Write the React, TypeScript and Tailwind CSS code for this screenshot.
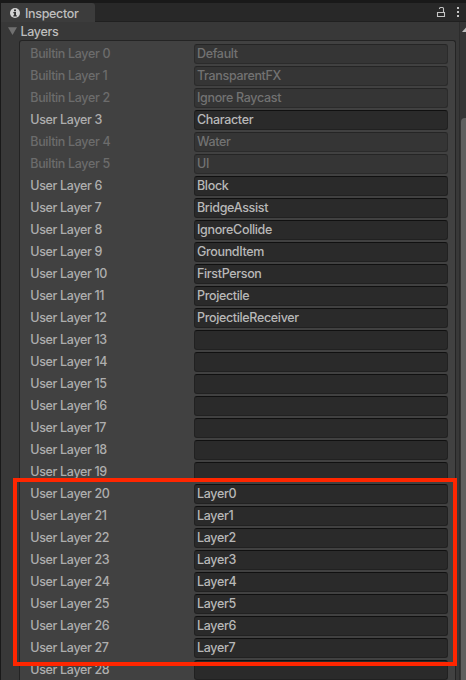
const names: Record<number, string> = {
  0: 'Default', 1: 'TransparentFX', 2: 'Ignore Raycast', 3: 'Character', 4: 'Water', 5: 'UI',
  6: 'Block', 7: 'BridgeAssist', 8: 'IgnoreCollide', 9: 'GroundItem', 10: 'FirstPerson',
  11: 'Projectile', 12: 'ProjectileReceiver',
  20: 'Layer0', 21: 'Layer1', 22: 'Layer2', 23: 'Layer3', 24: 'Layer4', 25: 'Layer5', 26: 'Layer6', 27: 'Layer7',
};
const builtin = [0, 1, 2, 4, 5];

function LayerRow({ index }: { index: number }) {
  const locked = builtin.includes(index);
  return (
    <div className="flex h-[22px] shrink-0 items-start">
      <div className={`w-[164px] shrink-0 pl-[0.3px] leading-[19px] ${locked ? 'text-[#6c6c6c]' : 'text-[#aeaeae]'}`}>
        {locked ? 'Builtin' : 'User'} Layer {index}
      </div>
      <div
        className={`h-5 w-[254px] rounded-[3px] border pl-[2px] leading-[17px] ${
          locked
            ? 'border-[#2b2b2b] border-t-[#252525] bg-[#353535] text-[#727272]'
            : 'border-[#212121] border-t-[#101010] bg-[#2a2a2a] text-[#b8b8b8]'
        }`}
      >
        {names[index] ?? ''}
      </div>
    </div>
  );
}

function Header() {
  return (
    <div className="flex h-[19px] shrink-0 bg-[#282828]">
      <div className="flex w-[94px] items-center rounded-tr-[3px] bg-[#3c3c3c] pl-[9px] text-[#bebebe]">
        <svg width="10" height="10" viewBox="0 0 10 10" className="mr-[5px] shrink-0">
          <circle cx="5" cy="5" r="5" fill="#d2d2d2" />
          <path d="M4 1.5h2v1.7H4zM3.3 4.1H6v3.2h.8v1.1H3.3V7.3h.8V5.2h-.8z" fill="#303030" />
        </svg>
        <span className="pt-px leading-[19px]">Inspector</span>
      </div>
      <div className="flex flex-1 items-start justify-end border-b border-[#202020]">
        <svg width="30" height="18" viewBox="0 0 30 18">
          <path d="M1.5 9.500h7v4h-7zM3.500 6V5.500q0-1 1-1h2q1 0 1 1v4" fill="none" stroke="#c4c4c4" strokeWidth="1.1" />
          <path d="M21 4h2v2h-2zM21 8h2v2h-2zM21 12h2v2h-2z" fill="#c4c4c4" />
        </svg>
      </div>
    </div>
  );
}

export default function App() {
  return (
    <div className="relative flex h-[680px] w-[466px] flex-col overflow-hidden border-l border-t-[3px] border-[#191919] bg-[#383838] font-['Inter',sans-serif] text-[12.5px] font-medium tracking-[-0.34px] whitespace-pre">
      <Header />
      <div className="flex min-h-0 flex-1">
        <div className="flex w-[458px] shrink-0 flex-col">
          <div className="flex h-[18px] shrink-0 items-center pl-[7px] text-[#bebebe]">
            <svg width="9" height="8" viewBox="0 0 9 8" className="mr-[3.5px]">
              <path d="M0 .3h9L4.5 8z" fill="#707070" />
            </svg>
            <span className="pt-px leading-[18px]">Layers</span>
          </div>
          <div className="ml-[18px] flex min-h-0 w-[437px] flex-1 flex-col overflow-hidden rounded-t-[3px] border border-b-0 border-[#242424] bg-[#414141] pl-[10px] pt-[3px]">
            {Array.from({ length: 29 }, (_, i) => <LayerRow key={i} index={i} />)}
          </div>
        </div>
        <div className="flex flex-1 flex-col border-l border-[#2c2c2c] bg-[#353535]">
          <svg width="6" height="96" viewBox="0 0 6 96" className="shrink-0">
            <path d="M2 10L6 5.500V10z" fill="#bcbcbc" />
          </svg>
          <div className="ml-px flex-1 rounded-tl-[4px] bg-[#5f5f5f]" />
        </div>
      </div>
      <div className="absolute left-[12px] top-[475px] h-[188px] w-[444px] border-4 border-[#ff2600]" />
    </div>
  );
}
